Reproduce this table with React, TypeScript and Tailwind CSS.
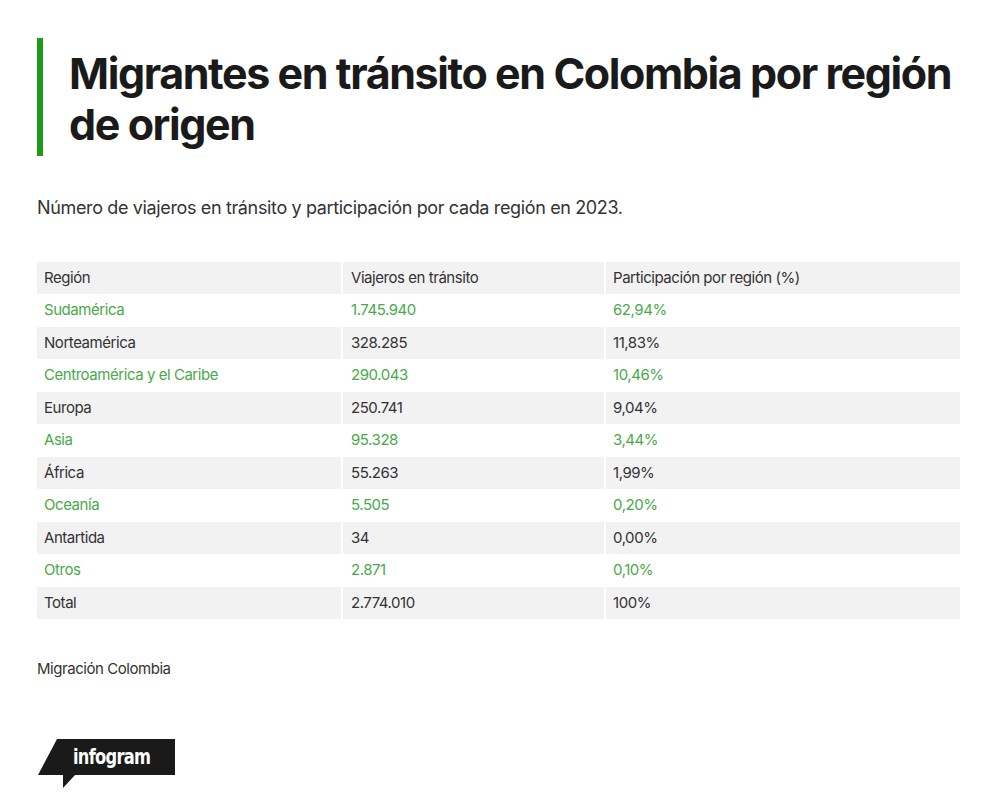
import React from "react";

const rows: [string, string, string][] = [
  ["Sudamérica", "1.745.940", "62,94%"],
  ["Norteamérica", "328.285", "11,83%"],
  ["Centroamérica y el Caribe", "290.043", "10,46%"],
  ["Europa", "250.741", "9,04%"],
  ["Asia", "95.328", "3,44%"],
  ["África", "55.263", "1,99%"],
  ["Oceanía", "5.505", "0,20%"],
  ["Antartida", "34", "0,00%"],
  ["Otros", "2.871", "0,10%"],
  ["Total", "2.774.010", "100%"],
];

export default function App() {
  return (
    <div className="w-[1000px] h-[806px] bg-white overflow-hidden font-['Inter','Liberation_Sans',sans-serif] text-[#333]">
      <div className="pl-[37px] pr-[30px] pt-[38px]">
        <div className="border-l-[6px] border-[#1a9c1a] pl-[26px] min-h-[118px] pt-[10px]">
          <h1 className="text-[43px] leading-[51px] font-bold tracking-[-0.033em] text-[#1a1a1a]">
            Migrantes en tránsito en Colombia por región de origen
          </h1>
        </div>
        <p className="mt-[40px] text-[18px] leading-[24px] tracking-[-0.02em] text-[#333]">
          Número de viajeros en tránsito y participación por cada región en 2023.
        </p>
        <div className="mt-[42px] w-[923px] text-[15px] tracking-[-0.03em]">
          <div className="grid grid-cols-[304px_261px_1fr] gap-x-[2px] h-[32px] items-center bg-white">
            <div className="bg-[#f2f2f2] h-full flex items-center pl-[7px]">Región</div>
            <div className="bg-[#f2f2f2] h-full flex items-center pl-[8px]">Viajeros en tránsito</div>
            <div className="bg-[#f2f2f2] h-full flex items-center pl-[7px]">Participación por región (%)</div>
          </div>
          {rows.map((r, i) => {
            const odd = i % 2 === 0;
            const cell = odd
              ? "h-full flex items-center bg-white text-[#49a94a]"
              : "h-full flex items-center bg-[#f2f2f2] text-[#333]";
            return (
              <div key={r[0]} className="grid grid-cols-[304px_261px_1fr] gap-x-[2px] h-[32.5px]">
                <div className={cell + " pl-[7px]"}>{r[0]}</div>
                <div className={cell + " pl-[8px]"}>{r[1]}</div>
                <div className={cell + " pl-[7px]"}>{r[2]}</div>
              </div>
            );
          })}
        </div>
        <p className="mt-[39px] text-[15px] tracking-[-0.03em] text-[#333]">Migración Colombia</p>
        <div className="mt-[58px] relative w-[140px] h-[52px]">
          <svg width="140" height="52" viewBox="0 0 140 52" className="absolute left-0 top-0">
            <path d="M20 0 H138 V36 H38 L26 49 V36 H1 Z" fill="#1a1a1a" />
          </svg>
          <span className="absolute left-[36px] top-[3px] text-white font-['DejaVu_Sans_Condensed','DejaVu_Sans',sans-serif] font-bold text-[21px] tracking-[-0.04em] leading-[30px] scale-x-[0.86] origin-left">
            infogram
          </span>
        </div>
      </div>
    </div>
  );
}
